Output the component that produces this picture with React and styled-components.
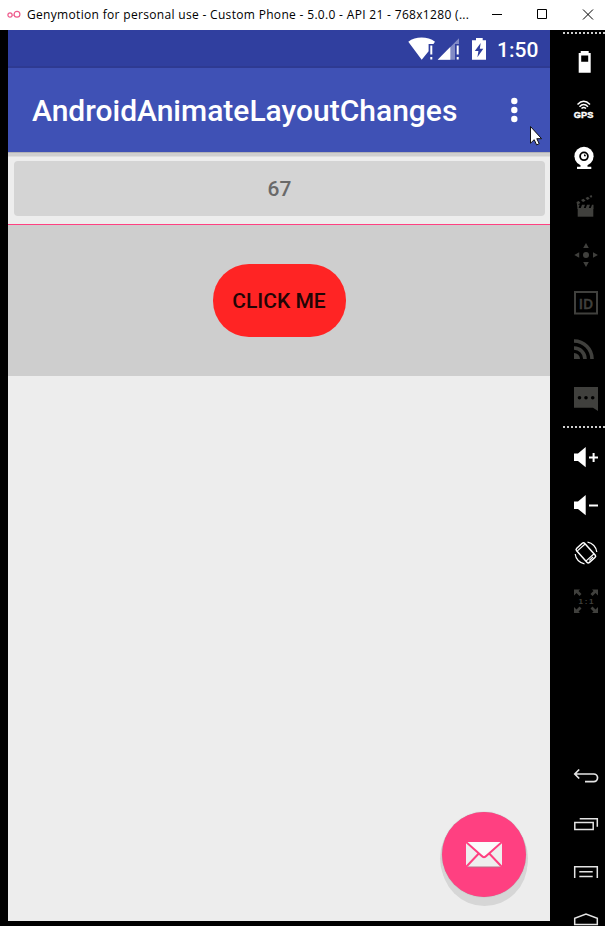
import React from "react";
import styled, { createGlobalStyle } from "styled-components";

const GlobalStyle = createGlobalStyle`
  * { box-sizing: border-box; }
  html, body { margin: 0; padding: 0; background: #000; overflow: hidden; }
  svg { display: block; flex: none; }
`;

const Window = styled.div`
  width: 605px;
  height: 926px;
  display: flex;
  flex-direction: column;
  overflow: hidden;
  background: #000;
  position: relative;
`;

const TitleBar = styled.header`
  height: 30px;
  flex: none;
  display: flex;
  align-items: center;
  background: #fff;
  padding-left: 7px;
`;

const TitleText = styled.span`
  margin-left: 6px;
  width: 454px;
  font: 12px/30px "Open Sans", "Noto Sans", sans-serif;
  letter-spacing: 0.32px;
  color: #000;
  white-space: nowrap;
`;

const Main = styled.div`
  flex: 1;
  min-height: 0;
  display: flex;
  padding-left: 8px;
`;

const Phone = styled.main`
  width: 542px;
  height: 891px;
  flex: none;
  display: flex;
  flex-direction: column;
  background: #ededed;
  font-family: Roboto, sans-serif;
  font-weight: 500;
`;

const StatusBar = styled.div`
  height: 38px;
  flex: none;
  display: flex;
  justify-content: flex-end;
  padding-right: 12px;
  background: #303f9f;
  border-bottom: 2px solid #2e3a92;
`;

const Clock = styled.span`
  width: 41px;
  margin-left: 2px;
  font-size: 21px;
  line-height: 40px;
  color: #fff;
  white-space: nowrap;
`;

const AppBar = styled.div`
  height: 84px;
  flex: none;
  display: flex;
  align-items: center;
  justify-content: space-between;
  padding: 2px 32px 0 24px;
  background: #3f51b5;
`;

const AppTitle = styled.h1`
  margin: 0;
  font-size: 30px;
  line-height: 40px;
  font-weight: 500;
  color: #fff;
  white-space: nowrap;
`;

const BarShadow = styled.div`
  height: 5px;
  flex: none;
  background: linear-gradient(#b3b3b7 0 1px, #cfcfcf 1px 4px, #dedede 4px);
`;

const CounterButton = styled.button`
  flex: none;
  height: 55px;
  margin: 4px 5px 8px 6px;
  padding: 1px 0 0;
  border: 0;
  border-radius: 4px;
  background: #d4d4d4;
  color: #696969;
  font: 500 21px/54px Roboto, sans-serif;
`;

const Panel = styled.section`
  flex: none;
  height: 152px;
  display: flex;
  justify-content: center;
  align-items: flex-start;
  padding-top: 39px;
  border-top: 1px solid #ff4081;
  background: #cecece;
`;

const PillButton = styled.button`
  width: 133px;
  height: 72.500px;
  padding: 2px 0 0;
  border: 0;
  border-radius: 36px;
  background: #ff2424;
  color: #220505;
  font: 500 21px/24px Roboto, sans-serif;
`;

const Fab = styled.button`
  width: 84px;
  height: 85px;
  margin: auto 24px 24px auto;
  flex: none;
  display: flex;
  align-items: center;
  justify-content: center;
  padding: 0;
  border: 0;
  border-radius: 50%;
  background: #ff4081;
  box-shadow: 0 0 1px #999, 0.5px 8px 0 1px #d6d6d6, 0 4px 0 2px #d3d3d3;
`;

const SideBar = styled.nav`
  width: 42px;
  margin-left: 13px;
  flex: none;
  display: flex;
  flex-direction: column;
`;

const Dots = styled.div`
  height: 2px;
  flex: none;
  margin: ${(p) => p.$margin};
  background: repeating-linear-gradient(90deg, #cfcfcf 0 2px, #000 2px 4px);
`;

const Slot = styled.svg`
  width: 32px;
  height: 48px;
  margin-left: 7px;
  color: ${(p) => (p.$off ? "#40403d" : "#fff")};
`;

const Gap = styled.div`
  height: 127px;
  flex: none;
`;

const Pointer = styled.svg`
  position: absolute;
  left: 529px;
  top: 125px;
`;

const Tool = ({ off, children }) => (
  <Slot $off={off} viewBox="0 0 32 48" fill="currentColor">
    {children}
  </Slot>
);

const Speaker = () => <path d="M4 20.5h4L15.7 14v20.3L8 28H4z" />;

const corner = "M4 12.500h6l-1.500 1.500 3 3-2 2-3-3L4 18.500z";

export default function App() {
  return (
    <>
      <GlobalStyle />
      <Window>
        <TitleBar>
          <svg width="14" height="12" viewBox="0 0 14 12" fill="none" stroke="#ee5a8c" strokeWidth="1.2">
            <circle cx="3" cy="6" r="2.1" />
            <circle cx="10" cy="5.2" r="2.9" />
            <path d="M5 6.2h2.2" strokeWidth=".7" />
          </svg>
          <TitleText>Genymotion for personal use - Custom Phone - 5.0.0 - API 21 - 768x1280 (...</TitleText>
          <svg width="124" height="30" viewBox="481 0 124 30" fill="none" stroke="#000">
            <path d="M492 14.5h10" />
            <path d="M537.5 9.5h9v9h-9z" />
            <path d="M583 9.5l10 10M593 9.5l-10 10" />
          </svg>
        </TitleBar>
        <Main>
          <Phone>
            <StatusBar>
              <svg width="88" height="36" viewBox="7 0 88 36" fill="#fff">
                <path d="M8.3 11.8C15.5 6.2 27.7 6.2 35 11.8L33.4 14H28.6V21.2L21.7 29.8Z" />
                <path d="M30.3 15.5h2v9h-2zM30.3 27h2v2.5h-2zM56.7 15.5h2v9h-2zM56.7 27h2v2.5h-2z" />
                <path d="M59 8.3V14h-4v15.7H37.7z" opacity=".4" />
                <path d="M50.3 17V29.7H37.7z" />
                <path d="M76 8h6.7v2.3H86v19.4H72V10.3H76z" />
                <path d="M80.7 13L74.8 21H78.4L77.4 27.2L83.3 18.8H79.8z" fill="#303f9f" />
              </svg>
              <Clock>1:50</Clock>
            </StatusBar>
            <AppBar>
              <AppTitle>AndroidAnimateLayoutChanges</AppTitle>
              <svg width="8" height="28" viewBox="0 0 8 28" fill="#fff">
                <circle cx="4.3" cy="4" r="3.2" />
                <circle cx="4.3" cy="13" r="3.2" />
                <circle cx="4.3" cy="22" r="3.2" />
              </svg>
            </AppBar>
            <BarShadow />
            <CounterButton>67</CounterButton>
            <Panel>
              <PillButton>CLICK ME</PillButton>
            </Panel>
            <Fab aria-label="Send mail">
              <svg width="36" height="26" viewBox="0 0 36 26">
                <path d="M0 0h36v25H0z" fill="#eee" />
                <path d="M0 0h36L18 15z" fill="#fbfbfb" />
                <path d="M2 25h32" stroke="#b96d86" strokeWidth="1" />
                <path d="M0 0L15.5 13.8Q18 16.500 20.5 13.8L36 0M0 25L12.5 11.8M36 25L23.5 11.8" fill="none" stroke="#ff4081" strokeWidth="2" />
              </svg>
            </Fab>
          </Phone>
          <SideBar>
            <Dots $margin="2px 0 4px" />
            <Tool>
              <path fillRule="evenodd" d="M10.7 13h8v2h2v19.7h-12V15h2zM11.2 17.5v6.2h7v-6.2z" />
            </Tool>
            <Tool>
              <g fill="none" stroke="currentColor" strokeWidth="1.5">
                <path d="M7.500 18.500Q13.700 12.200 20 18.500" />
                <path d="M9.500 20.700Q13.700 16.300 18 20.700" />
                <path d="M11.500 22.500Q13.700 20.500 16 22.500" />
              </g>
              <text x="3.8" y="32" fontFamily="Liberation Sans, sans-serif" fontWeight="700" fontSize="9" textLength="19.5" lengthAdjust="spacingAndGlyphs" stroke="currentColor" strokeWidth=".4">GPS</text>
            </Tool>
            <Tool>
              <circle cx="14" cy="22.3" r="9.6" />
              <path d="M10.5 30h7v2.7h3.8V35H7v-2.3h3.5z" />
              <circle cx="14" cy="22.3" r="3.9" fill="none" stroke="#000" strokeWidth="1.8" />
              <path d="M14 20.3v2h2a2 2 0 0 0-2-2z" fill="#000" />
            </Tool>
            <Tool off>
              <path d="M7.7 26h15.6v8.7H7.7z" />
              <path d="M7.7 22.7h2l-1.5 4h-.5zM12 22.7h3l-1.5 4h-3zM17 22.7h3l-1.5 4h-3zM22 22.7h1.5v4h-3z" />
              <path d="M6.5 20l2.200-1 1.800 2-3 1.400zM11 18l2.500-1.200 2 1.900-2.500 1.200zM15.500 16l2.500-1.200 1.700 1.900-2.500 1.200zM19.500 14l2-1 .8 2-1.500.7z" />
              <path d="M6.7 20.5h1.6V27H7.7z" />
            </Tool>
            <Tool off>
              <circle cx="16" cy="25" r="3" />
              <path d="M16 13l2.8 5h-5.6zM16 37l2.8-5h-5.6zM4.300 25l4.900-2.700v5.400zM27.900 25L23 22.300v5.400z" />
            </Tool>
            <Tool off>
              <path d="M5 14h22v21.500H5z" fill="none" stroke="currentColor" strokeWidth="2" />
              <text x="8.7" y="30.5" fontFamily="Open Sans, sans-serif" fontWeight="600" fontSize="15" stroke="currentColor" strokeWidth=".4" textLength="14.5" lengthAdjust="spacingAndGlyphs">ID</text>
            </Tool>
            <Tool off>
              <path d="M4 27a6 6 0 0 1 6 6H4z" />
              <path d="M4 22a11 11 0 0 1 11 11M4 15a18 18 0 0 1 18 18" fill="none" stroke="currentColor" strokeWidth="3.6" />
            </Tool>
            <Tool off>
              <path d="M4 13h24v24l-5-3.300H4z" />
              <g fill="#000">
                <circle cx="9.5" cy="23.7" r="1.8" />
                <circle cx="16" cy="23.7" r="1.8" />
                <circle cx="22.7" cy="23.7" r="1.8" />
              </g>
            </Tool>
            <Dots $margin="4px 0 5px" />
            <Tool>
              <Speaker />
              <path d="M19 23.5h3.6V20h2v3.500H28v2h-3.400V29h-2v-3.500H19z" />
            </Tool>
            <Tool>
              <Speaker />
              <path d="M19 23.5h9v2h-9z" />
            </Tool>
            <Tool>
              <g fill="none" stroke="currentColor" transform="rotate(-42 16 24)">
                <rect x="10.5" y="14.3" width="11" height="19" rx="1.8" strokeWidth="1.5" />
                <path d="M10.500 30h11M11 16.700h10" strokeWidth="1.2" />
                <path d="M13.500 31.700h5" strokeWidth="1.2" />
              </g>
              <path d="M17.500 13.200A11 11 0 0 1 26.800 23M14.500 34.800A11 11 0 0 1 5.200 25" fill="none" stroke="currentColor" strokeWidth="1.2" />
            </Tool>
            <Tool off>
              <path d={corner} />
              <path d={corner} transform="matrix(-1 0 0 1 32 0)" />
              <path d={corner} transform="matrix(1 0 0 -1 0 48.5)" />
              <path d={corner} transform="matrix(-1 0 0 -1 32 48.5)" />
              <text x="8.5" y="27.3" fontFamily="Liberation Sans, sans-serif" fontWeight="700" fontSize="8" textLength="15" lengthAdjust="spacing">1:1</text>
            </Tool>
            <Gap />
            <Tool>
              <path d="M9.200 17.500L4.800 22l4.400 4.500M5 22h18.700a3.800 3.800 0 0 1 0 7.700H15" fill="none" stroke="#e4e4e4" strokeWidth="1.7" />
            </Tool>
            <Tool>
              <path d="M4.800 22.500h18.400v7H4.800zM9.700 18.700h17.600v8" fill="none" stroke="#e4e4e4" strokeWidth="1.5" />
            </Tool>
            <Tool>
              <path d="M4.700 30V18.700h22.600V30M9.300 23.700h13.400M9.300 28.400h13.400" fill="none" stroke="#e4e4e4" strokeWidth="1.5" />
            </Tool>
            <Tool>
              <path d="M4.700 28.500v-6.300L16 18l11.300 4.200v6.300z" fill="none" stroke="#e4e4e4" strokeWidth="1.5" />
            </Tool>
          </SideBar>
        </Main>
        <Pointer width="14" height="22" viewBox="0 0 14 22">
          <path d="M1.500 1.500v16.700l3.700-3.500 2.400 5.200 2.600-1.200-2.400-5h4.800z" fill="#fff" stroke="#111" strokeWidth="1" />
        </Pointer>
      </Window>
    </>
  );
}
